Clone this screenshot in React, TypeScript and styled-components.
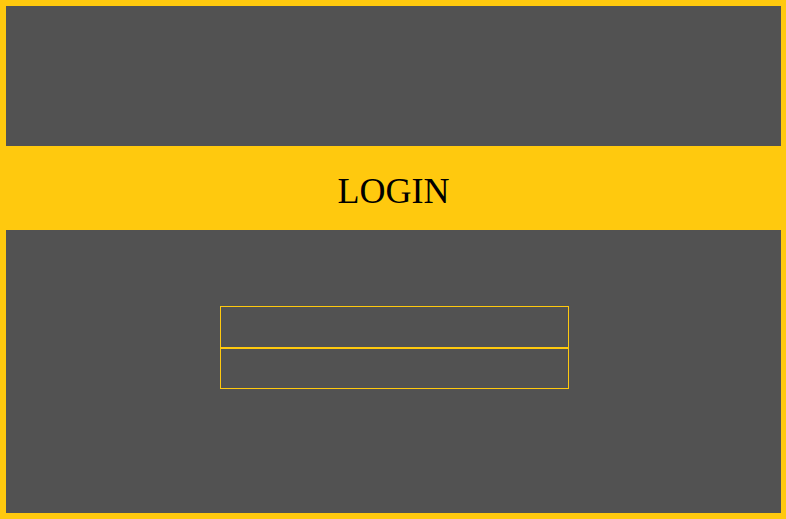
import React from "react";
import styled, { createGlobalStyle } from "styled-components";

const Global = createGlobalStyle`
  html, body { margin: 0; padding: 0; background: #ffc90e; }
  * { box-sizing: border-box; }
`;

const Page = styled.div`
  width: 786px;
  height: 519px;
  background: #ffc90e;
  display: flex;
  flex-direction: column;
`;

const Panel = styled.div<{ $h: number; $top?: boolean }>`
  height: ${(p) => p.$h}px;
  margin: ${(p) => (p.$top ? "6px 5px 0 6px" : "0 5px 6px 6px")};
  background: #525252;
  display: flex;
  flex-direction: column;
  align-items: center;
`;

const Banner = styled.div`
  height: 84px;
  display: flex;
  align-items: center;
  justify-content: center;
  padding-left: 1px;
`;

const Title = styled.h1`
  margin: 0;
  font-family: "Liberation Serif", "Times New Roman", serif;
  font-weight: normal;
  font-size: 36px;
  line-height: 1;
  color: #000;
  padding-top: 6px;
`;

const Form = styled.form`
  margin-top: 76px;
  margin-left: 1px;
  display: flex;
  flex-direction: column;
`;

const Field = styled.input<{ $h: number }>`
  width: 349px;
  height: ${(p) => p.$h}px;
  border: 1px solid #ffc90e;
  background: transparent;
  outline: none;
  padding: 0 8px;
  color: #fff;
  font-family: "Liberation Sans", Arial, sans-serif;
  font-size: 14px;
`;

export default function App() {
  return (
    <>
      <Global />
      <Page>
        <Panel $h={140} $top />
        <Banner>
          <Title>LOGIN</Title>
        </Banner>
        <Panel $h={283}>
          <Form onSubmit={(e) => e.preventDefault()}>
            <Field $h={42} type="text" />
            <Field $h={41} type="password" />
          </Form>
        </Panel>
      </Page>
    </>
  );
}
